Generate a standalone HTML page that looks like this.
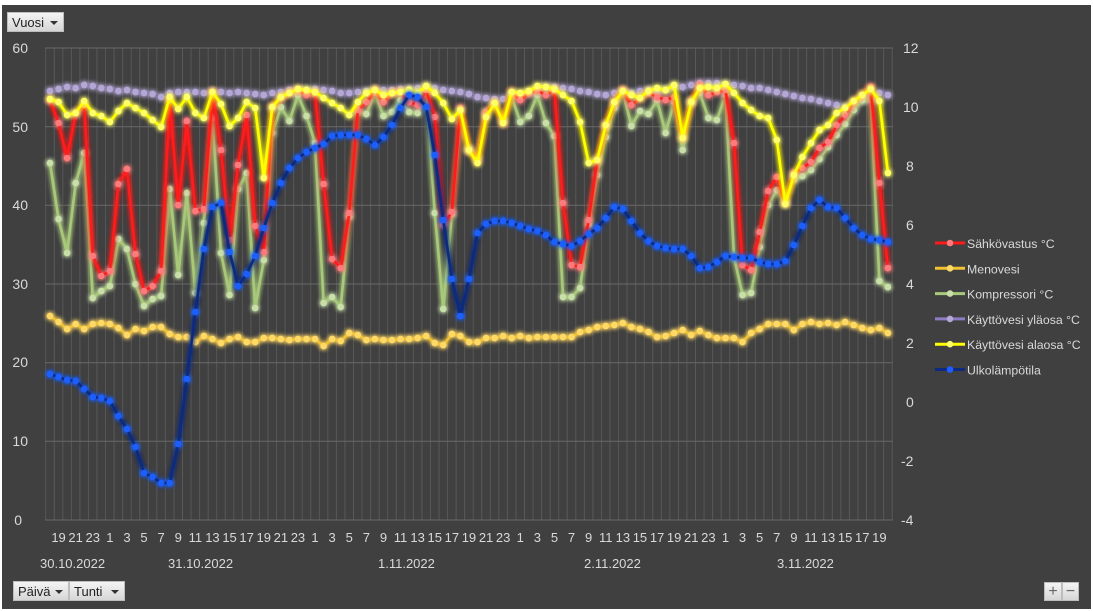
<!DOCTYPE html>
<html><head><meta charset="utf-8">
<style>
html,body{margin:0;padding:0;}
body{width:1093px;height:611px;overflow:hidden;background:#fff;position:relative;font-family:"Liberation Sans",sans-serif;}
#chart{position:absolute;left:2px;top:5px;width:1089px;height:604px;background:#404040;}
.btn{position:absolute;height:20px;background:linear-gradient(#f4f4f4,#d6d6d6);border:1px solid #bdbdbd;box-sizing:border-box;font-size:13px;color:#222;line-height:19px;padding-left:4px;}
.btn .ar{position:absolute;right:5px;top:8px;width:0;height:0;border-left:4px solid transparent;border-right:4px solid transparent;border-top:4px solid #333;}
svg text{font-family:"Liberation Sans",sans-serif;}
</style></head><body>
<div id="chart"></div>
<svg id="s" width="1093" height="611" style="position:absolute;left:0;top:0">
<defs>
<filter id="g" x="-10%" y="-10%" width="120%" height="120%"><feGaussianBlur stdDeviation="2.5" result="b"/><feMerge><feMergeNode in="b"/><feMergeNode in="b"/><feMergeNode in="SourceGraphic"/></feMerge></filter>
</defs>
<g id="grid"></g>
<g id="series"></g>
<g fill="#d9d9d9" font-size="14" text-anchor="end">
<text x="28" y="53">60</text><text x="28" y="132">50</text><text x="28" y="210">40</text><text x="28" y="289">30</text><text x="28" y="367">20</text><text x="28" y="446">10</text><text x="22" y="525">0</text>
</g>
<g fill="#d9d9d9" font-size="14">
<text x="903" y="53">12</text><text x="903" y="112">10</text><text x="906" y="171">8</text><text x="906" y="230">6</text><text x="906" y="289">4</text><text x="906" y="348">2</text><text x="906" y="407">0</text><text x="901" y="466">-2</text><text x="901" y="525">-4</text>
</g>
<g id="hrs" fill="#d9d9d9" font-size="13" text-anchor="middle"></g>
<g fill="#d9d9d9" font-size="13">
<text x="40" y="568">30.10.2022</text><text x="168" y="568">31.10.2022</text><text x="378" y="568">1.11.2022</text><text x="584" y="568">2.11.2022</text><text x="777" y="568">3.11.2022</text>
</g>
<g id="leg" font-size="12.3" fill="#d9d9d9"></g>
</svg>
<div class="btn" style="left:7px;top:12px;width:57px;">Vuosi<span class="ar"></span></div>
<div class="btn" style="left:13px;top:581px;width:56px;">Päivä<span class="ar"></span></div>
<div class="btn" style="left:69px;top:581px;width:56px;">Tunti<span class="ar"></span></div>
<div class="btn" style="left:1044px;top:582px;width:18px;height:19px;padding:0;text-align:center;font-size:16px;color:#666;line-height:17px;">+</div>
<div class="btn" style="left:1062px;top:582px;width:17px;height:19px;padding:0;text-align:center;font-size:16px;color:#666;line-height:17px;">−</div>
<script>
var NS="http://www.w3.org/2000/svg";
function X(i){return 50+8.55*i;}
function el(t,a,p){var e=document.createElementNS(NS,t);for(var k in a)e.setAttribute(k,a[k]);p.appendChild(e);return e;}
var grid=document.getElementById('grid');
for(var i=0;i<=99;i++){var x=X(i)-4.3;el('line',{x1:x,y1:48,x2:x,y2:520,stroke:'#585858','stroke-width':1},grid);}
[48,126.7,205.3,284,362.7,441.3,520].forEach(function(y){el('line',{x1:45,y1:y,x2:893,y2:y,stroke:'#686868','stroke-width':1},grid);});
var hrs=document.getElementById('hrs');
for(var i=1;i<=98;i+=2){var t=el('text',{x:X(i),y:542},hrs);t.textContent=(18+i)%24;}
var purple=[91,89,87,88,85,86,88,89,91,90,92,93,94,97,93,92,92,92,93,92,92,93,92,93,94,95,93,92,90,90,90,89,90,91,93,93,92,91,90,90,90,89,89,88,87,88,90,91,92,94,97,98,99,99,97,95,93,90,87,87,88,89,91,92,94,95,93,92,93,91,90,92,90,87,87,85,83,83,83,85,85,86,88,88,90,92,94,96,98,99,101,103,105,107,105,100,97,93,95];
var orange=[316,322,329,324,329,324,323,324,328,335,329,331,327,327,334,337,337,342,336,339,343,339,337,342,342,338,338,339,340,339,339,339,346,339,341,333,335,340,339,340,340,339,339,338,336,343,345,334,336,342,342,338,338,336,338,336,338,337,337,337,337,337,332,330,327,326,325,323,327,329,332,337,336,333,330,335,331,335,338,338,338,342,333,329,324,324,324,330,324,322,324,323,325,322,325,328,330,328,333];
var green=[163,219,253,183,153,298,291,286,239,249,284,306,299,296,189,275,193,293,223,118,253,295,189,173,308,260,133,107,121,95,116,143,303,297,307,217,111,114,93,116,112,100,112,113,90,213,309,214,123,150,157,112,103,120,97,122,116,95,123,136,297,297,288,225,175,137,108,92,126,111,114,100,133,102,150,102,93,118,120,95,257,295,293,247,205,190,203,180,176,170,159,147,135,124,110,100,100,281,287];
var red=[100,123,158,113,105,256,276,271,184,169,254,291,286,271,100,205,121,211,209,92,150,240,165,115,226,252,107,98,93,90,95,93,184,259,268,213,110,102,90,102,93,92,102,105,90,117,225,212,108,150,160,113,103,123,92,100,93,90,95,90,203,265,267,220,160,125,102,90,105,98,93,97,100,97,138,102,85,95,92,90,143,265,270,232,191,177,203,173,168,162,148,142,125,115,102,95,87,183,268];
var yellow=[99,102,115,113,101,113,116,122,111,103,108,113,120,127,97,109,97,113,118,92,104,126,118,102,108,178,107,97,93,89,90,92,98,103,108,115,102,93,90,95,93,92,90,93,86,93,103,119,110,150,163,117,103,123,92,93,91,86,87,89,95,101,122,163,160,125,102,91,95,98,91,88,90,85,138,102,88,87,88,84,93,103,110,116,118,140,204,175,157,143,130,125,113,108,101,95,89,101,173];
var blue=[374,377,380,381,389,397,398,401,416,429,447,473,477,483,483,444,379,312,249,207,203,252,286,274,256,228,203,183,168,158,152,148,144,136,135,135,135,139,145,137,125,108,95,97,107,155,220,279,316,279,233,224,221,221,223,226,229,231,235,242,244,246,241,234,228,218,207,209,221,233,241,246,248,249,249,256,268,267,262,256,257,258,258,262,264,264,261,245,226,208,200,207,208,218,228,235,239,240,242];
var S=[
 {d:purple,l:'#8e7cc3',m:'#b4a7d6',n:'Käyttövesi yläosa °C',line:false},
 {d:orange,l:'#f1c232',m:'#ffd966',n:'Menovesi'},
 {d:green,l:'#a9c97a',m:'#c9dfa8',n:'Kompressori °C'},
 {d:red,l:'#ff1a1a',m:'#ff7a7a',n:'Sähkövastus °C'},
 {d:yellow,l:'#ffff00',m:'#ffff66',n:'Käyttövesi alaosa °C'},
 {d:blue,l:'#0b2a80',m:'#1f5fff',n:'Ulkolämpötila'}
];
var sg=document.getElementById('series');
S.forEach(function(s){
 var pts=s.d.map(function(y,i){return X(i).toFixed(1)+','+y;}).join(' ');
 var g=el('g',{filter:'url(#g)'},sg);
 if(s.line!==false) el('polyline',{points:pts,fill:'none',stroke:s.l,'stroke-width':2.6,'stroke-linejoin':'round'},g);
 else el('polyline',{points:pts,fill:'none',stroke:'#6a5a9a','stroke-width':1.5,opacity:0.5},g);
 s.d.forEach(function(y,i){el('circle',{cx:X(i),cy:y,r:3.3,fill:s.m},g);});
});
var order=[3,1,2,0,4,5],leg=document.getElementById('leg');
order.forEach(function(k,j){var s=S[k],y=243+25.3*j;
 el('line',{x1:935,y1:y,x2:965,y2:y,stroke:(k==0?'#8e7cc3':s.l),'stroke-width':3},leg);
 el('circle',{cx:950,cy:y,r:3.3,fill:s.m},leg);
 var t=el('text',{x:967,y:y+5},leg);t.textContent=s.n;});
</script>
</body></html>
